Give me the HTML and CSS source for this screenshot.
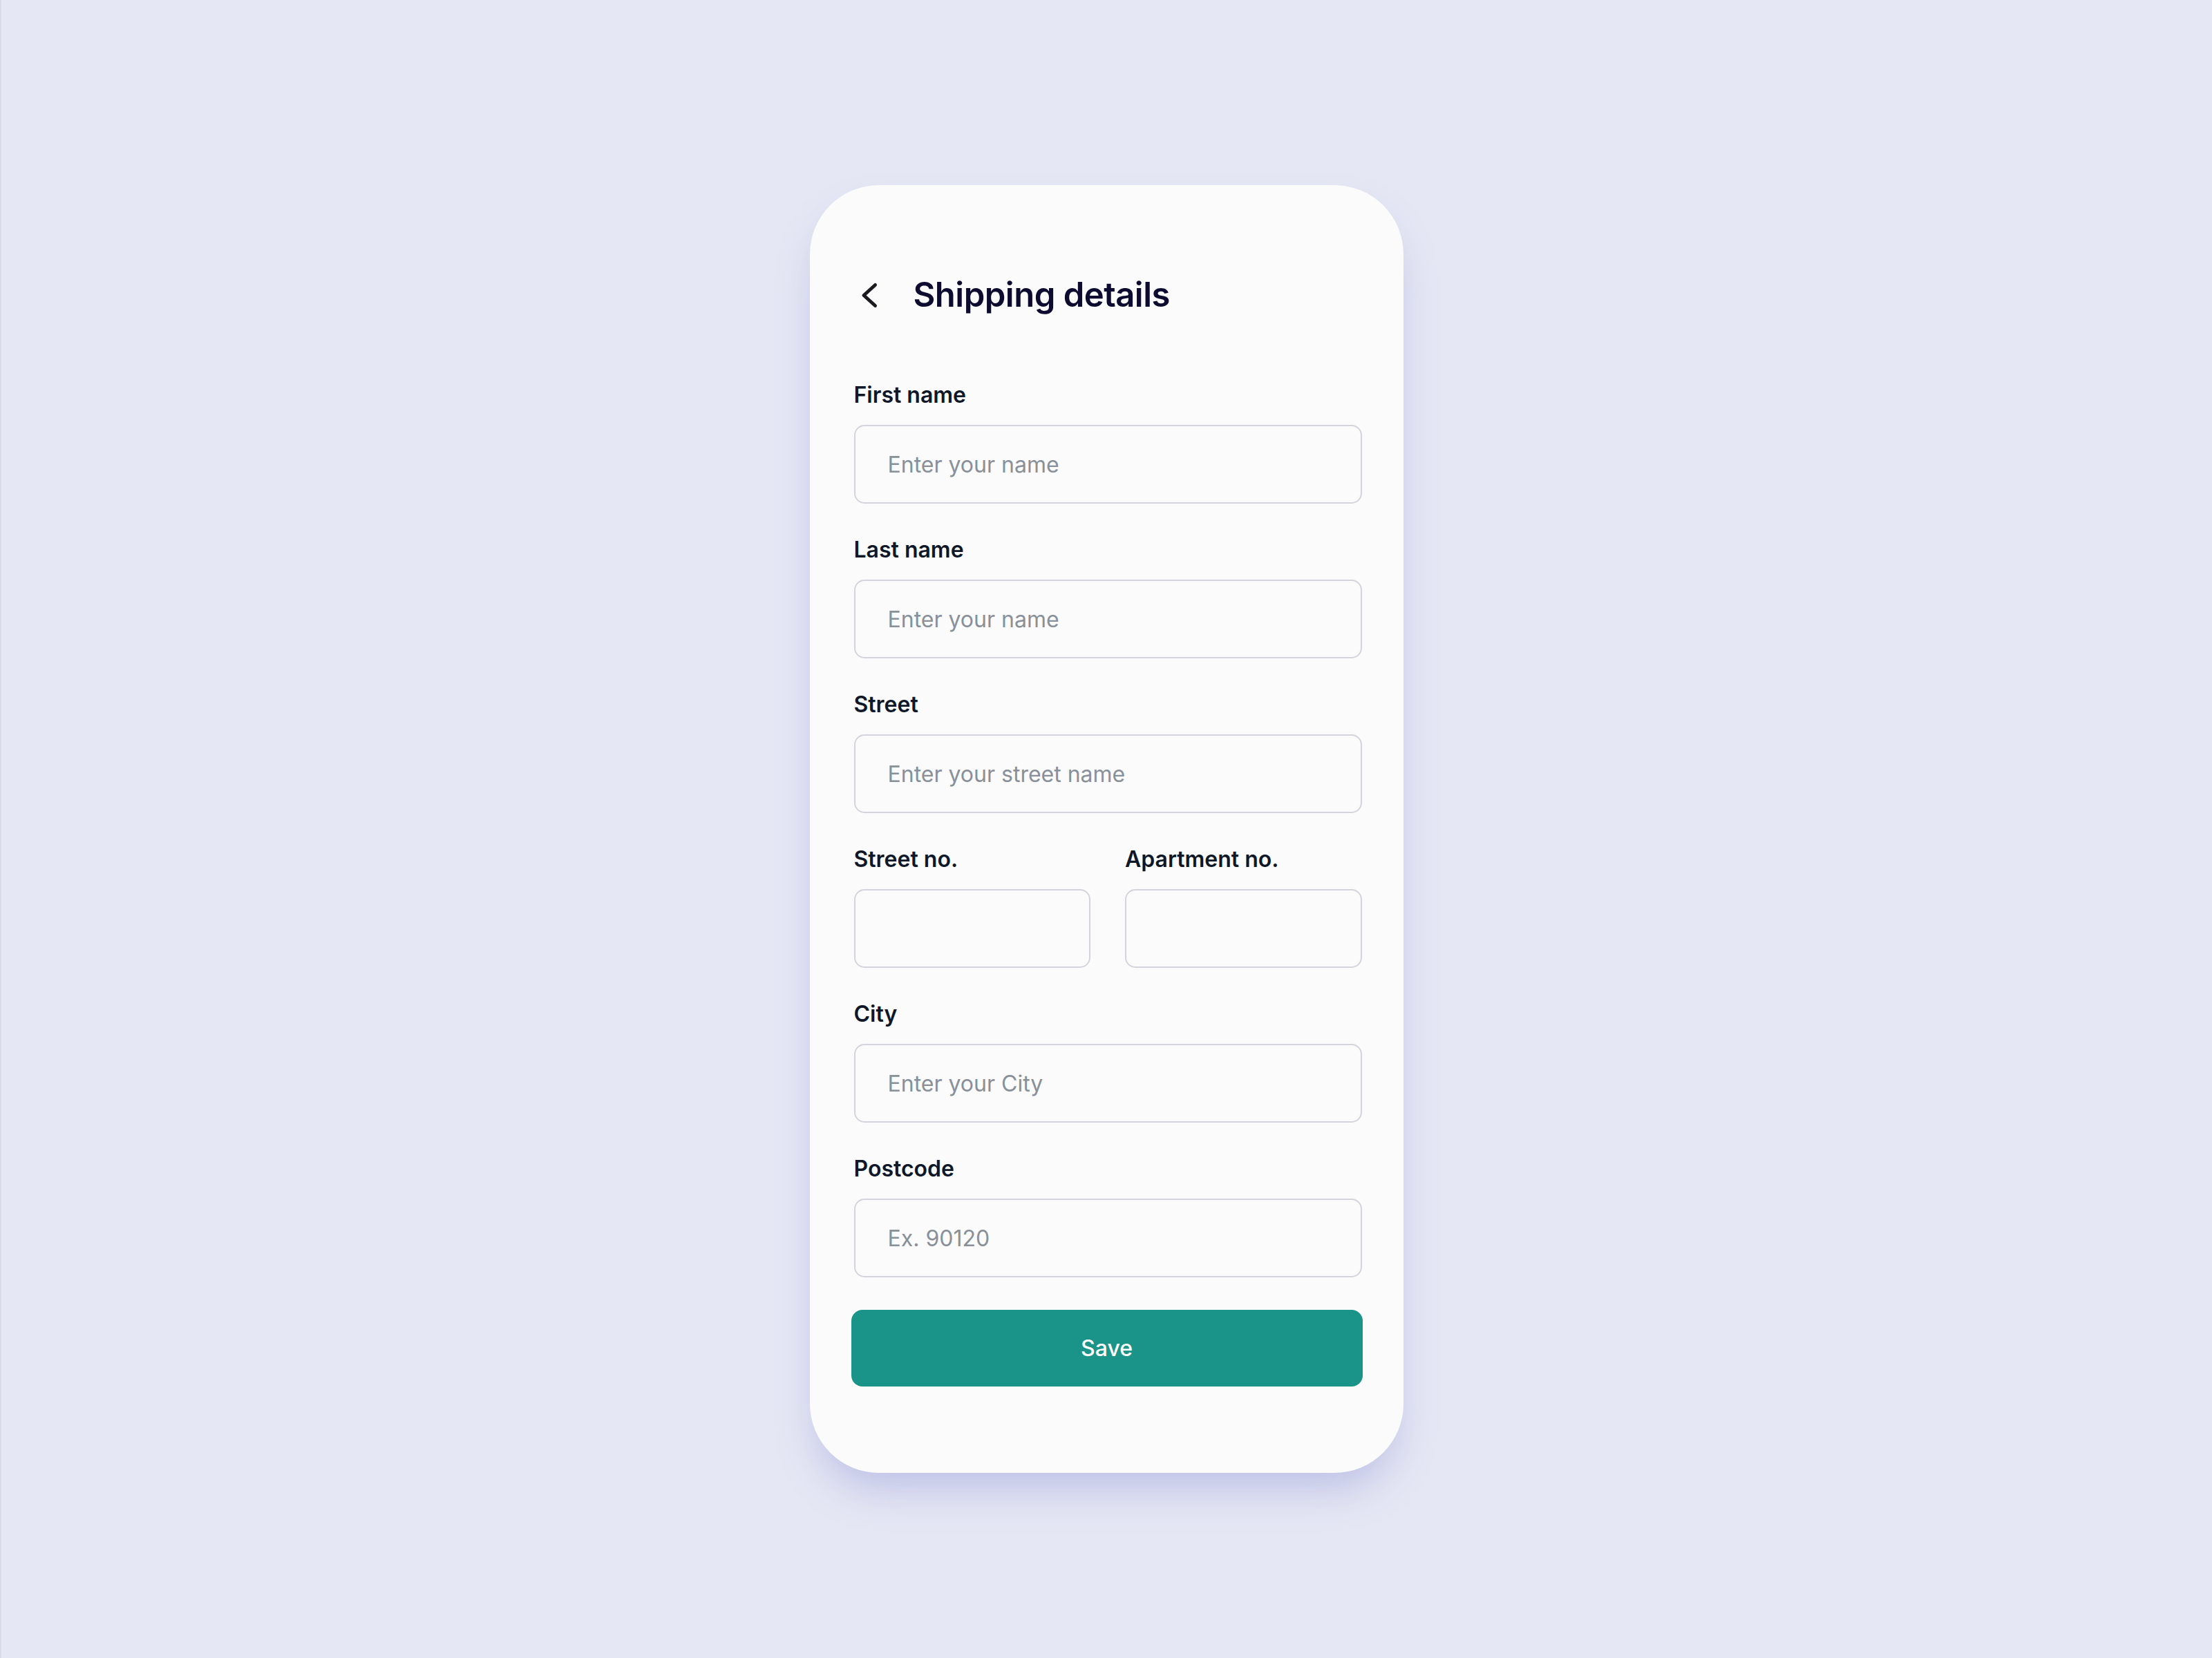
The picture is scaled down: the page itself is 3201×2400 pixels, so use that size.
FILE: index.html
```html
<!DOCTYPE html>
<html lang="en">
<head>
<meta charset="utf-8">
<title>Shipping details</title>
<link rel="stylesheet" href="styles.css">
</head>
<body>
  <main class="card">
    <header class="header">
      <button class="back" type="button" aria-label="Back">
        <svg class="back-icon" width="36" height="40" viewBox="0 0 36 40" fill="none">
          <path d="M30.5 5.5 L14 20.5 L30.5 35.5" stroke="#1b1b1f" stroke-width="5" stroke-linecap="round" stroke-linejoin="round"/>
        </svg>
      </button>
      <h1 class="title">Shipping details</h1>
    </header>

    <form class="form">
      <div class="field">
        <label class="label">First name</label>
        <input class="input" type="text" placeholder="Enter your name">
      </div>
      <div class="field">
        <label class="label">Last name</label>
        <input class="input" type="text" placeholder="Enter your name">
      </div>
      <div class="field">
        <label class="label">Street</label>
        <input class="input" type="text" placeholder="Enter your street name">
      </div>
      <div class="row">
        <div class="field">
          <label class="label">Street no.</label>
          <input class="input" type="text">
        </div>
        <div class="field">
          <label class="label">Apartment no.</label>
          <input class="input" type="text">
        </div>
      </div>
      <div class="field">
        <label class="label">City</label>
        <input class="input" type="text" placeholder="Enter your City">
      </div>
      <div class="field">
        <label class="label">Postcode</label>
        <input class="input" type="text" placeholder="Ex. 90120">
      </div>
      <button class="save" type="button">Save</button>
    </form>
  </main>
</body>
</html>
```

FILE: styles.css
```css
* {
  box-sizing: border-box;
}

html, body {
  margin: 0;
  padding: 0;
}

body {
  min-height: 100vh;
  background: #e5e7f4;
  display: flex;
  align-items: center;
  justify-content: center;
  font-family: Inter, "Noto Sans", sans-serif;
  box-shadow: inset 2px 0 0 #d9dbe6;
}

.card {
  width: 859px;
  margin-left: 1px;
  background: #fbfbfb;
  border-radius: 100px;
  padding: 129px 60px 125px 64px;
  box-shadow: 0 34px 60px -14px rgba(120, 126, 205, 0.38);
}

.header {
  height: 60px;
  display: flex;
  align-items: center;
  gap: 50px;
}

.back {
  display: flex;
  align-items: center;
  justify-content: center;
  padding: 0;
  margin: 0;
  border: 0;
  background: transparent;
  width: 36px;
  height: 40px;
  cursor: pointer;
}

.back-icon {
  display: block;
}

.title {
  margin: 0;
  font-size: 49px;
  line-height: 60px;
  font-weight: 600;
  color: #0d0c30;
  letter-spacing: -0.5px;
}

.form {
  margin-top: 95px;
  display: flex;
  flex-direction: column;
  gap: 47px;
}

.field {
  display: flex;
  flex-direction: column;
  gap: 23px;
  min-width: 0;
}

.row {
  display: grid;
  grid-template-columns: 1fr 1fr;
  gap: 50px;
}

.label {
  font-size: 32px;
  line-height: 40px;
  font-weight: 600;
  color: #0e1828;
}

.input {
  width: 100%;
  height: 114px;
  border: 2px solid #d4d4dc;
  border-radius: 15px;
  background: #fbfbfb;
  padding: 0 20px 0 47px;
  font-family: Inter, "Noto Sans", sans-serif;
  font-size: 32px;
  color: #0e1828;
  outline: none;
}

.input::placeholder {
  color: #88909a;
  opacity: 1;
}

.save {
  margin-left: -4px;
  width: calc(100% + 5px);
  height: 111px;
  border: 0;
  border-radius: 16px;
  background: #1a9488;
  color: #ffffff;
  font-family: Inter, "Noto Sans", sans-serif;
  font-size: 32px;
  font-weight: 500;
  cursor: pointer;
}
```
